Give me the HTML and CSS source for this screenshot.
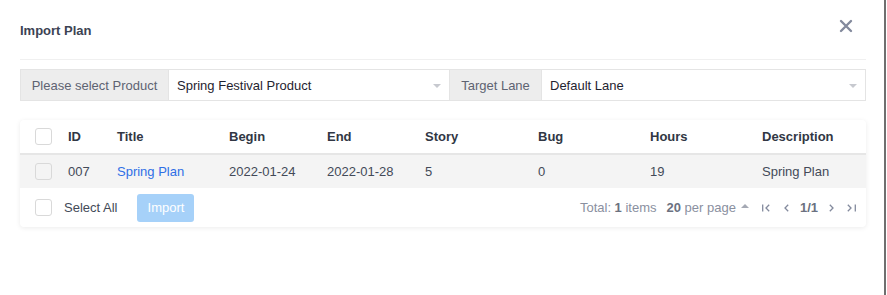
FILE: index.html
```html
<!DOCTYPE html>
<html>
<head>
<meta name="viewport" content="width=device-width, initial-scale=1">
<title>Import Plan</title>
<link rel="stylesheet" href="styles.css">
</head>
<body>

<div class="modal">
  <div class="modal-header">
    <span class="modal-title">Import Plan</span>
    <span class="close">
      <svg width="14" height="14" viewBox="0 0 14 14"><path d="M2 2 L12 12 M12 2 L2 12" stroke="#838a9d" stroke-width="2.4" stroke-linecap="round"/></svg>
    </span>
  </div>

  <div class="input-group">
    <span class="addon addon-product">Please select Product</span>
    <div class="picker picker-product">Spring Festival Product<span class="caret"></span></div>
    <span class="addon addon-lane">Target Lane</span>
    <div class="picker picker-lane">Default Lane<span class="caret"></span></div>
  </div>

  <div class="card">
    <table class="plans">
      <thead>
        <tr>
          <th class="c-check"><span class="checkbox"></span></th>
          <th class="c-id">ID</th>
          <th class="c-title">Title</th>
          <th class="c-date">Begin</th>
          <th class="c-date">End</th>
          <th class="c-story">Story</th>
          <th class="c-num">Bug</th>
          <th class="c-num">Hours</th>
          <th>Description</th>
        </tr>
      </thead>
      <tbody>
        <tr>
          <td class="c-check"><span class="checkbox"></span></td>
          <td>007</td>
          <td><a href="#">Spring Plan</a></td>
          <td>2022-01-24</td>
          <td>2022-01-28</td>
          <td>5</td>
          <td>0</td>
          <td>19</td>
          <td>Spring Plan</td>
        </tr>
      </tbody>
    </table>
    <div class="table-footer">
      <label class="select-all"><span class="checkbox"></span>Select All</label>
      <button class="btn-import" disabled>Import</button>
      <div class="pager">
        <span class="total">Total: <strong>1</strong> items</span>
        <span class="per-page"><strong>20</strong> per page</span>
        <span class="up"></span>
        <svg class="pg-first" width="8" height="8" viewBox="0 0 8 8"><path d="M0.7 0.5 V7.5 M7.2 0.8 L4 4 L7.2 7.2" fill="none" stroke="#838a9d" stroke-width="1.3"/></svg>
        <svg class="pg-prev" width="5" height="8" viewBox="0 0 5 8"><path d="M4.2 0.8 L1 4 L4.2 7.2" fill="none" stroke="#838a9d" stroke-width="1.3"/></svg>
        <strong class="pg-num">1/1</strong>
        <svg class="pg-next" width="5" height="8" viewBox="0 0 5 8"><path d="M0.8 0.8 L4 4 L0.8 7.2" fill="none" stroke="#838a9d" stroke-width="1.3"/></svg>
        <svg class="pg-last" width="9" height="8" viewBox="0 0 9 8"><path d="M0.8 0.8 L4 4 L0.8 7.2 M8.3 0.5 V7.5" fill="none" stroke="#838a9d" stroke-width="1.3"/></svg>
      </div>
    </div>
  </div>
</div>

</body>
</html>
```

FILE: styles.css
```css
body {
  margin: 0;
  background: #fff;
  font-family: "Liberation Sans", Arial, sans-serif;
  font-size: 13px;
  color: #3c4353;
}

.modal {
  width: 846px;
  height: 295px;
  padding: 0 18px 0 20px;
  border-right: 2px solid #6f6f6f;
}

/* header */
.modal-header {
  height: 59px;
  display: flex;
  align-items: center;
  justify-content: space-between;
  border-bottom: 1px solid #f0f0f0;
}

.modal-title {
  font-weight: bold;
  color: #3c4353;
  margin-top: 2px;
}

.close {
  margin-right: 13px;
  margin-bottom: 8px;
  display: flex;
}

/* product / lane pickers */
.input-group {
  display: flex;
  height: 32px;
  margin-top: 9px;
}

.addon {
  display: flex;
  align-items: center;
  justify-content: center;
  box-sizing: border-box;
  background-color: #ededed;
  color: #5e6372;
  border: 1px solid #e4e4e4;
  border-right: none;
}

.addon-product { width: 148px; }
.addon-lane { width: 92px; }

.picker {
  position: relative;
  display: flex;
  align-items: center;
  box-sizing: border-box;
  padding: 0 8px;
  background: #fff;
  border: 1px solid #e4e4e4;
  color: #1f2430;
}

.picker-product {
  width: 281px;
  border-right: none;
}

.picker-lane {
  flex: 1;
}

.caret {
  position: absolute;
  right: 8px;
  top: 14px;
  border-left: 4px solid transparent;
  border-right: 4px solid transparent;
  border-top: 4px solid #c7c9cf;
}

/* table card */
.card {
  margin-top: 19px;
  background: #fff;
  border-radius: 4px;
  box-shadow: 0 1px 5px rgba(0, 0, 0, 0.08);
}

.plans {
  width: 100%;
  border-collapse: collapse;
  table-layout: fixed;
}

.plans th,
.plans td {
  text-align: left;
  padding: 0;
  white-space: nowrap;
}

.plans th {
  height: 33px;
  font-weight: bold;
  color: #313744;
  border-bottom: 2px solid #e6e6e6;
}

.plans td {
  height: 33px;
  background-color: #f4f4f4;
  color: #434a58;
}

.plans a {
  color: #2f6fe6;
  text-decoration: none;
}

.plans .c-check {
  width: 33px;
  padding-left: 15px;
}

.c-id { width: 49px; }
.c-title { width: 112px; }
.c-date { width: 98px; }
.c-story { width: 113px; }
.c-num { width: 112px; }

.checkbox {
  display: inline-block;
  width: 15px;
  height: 15px;
  border: 1px solid #d9d9d9;
  border-radius: 3px;
  background: #fff;
  vertical-align: middle;
}

.plans td .checkbox {
  background: #f4f4f4;
}

/* footer */
.table-footer {
  display: flex;
  align-items: center;
  height: 39px;
  padding-left: 15px;
  padding-right: 10px;
}

.select-all {
  display: flex;
  align-items: center;
  gap: 12px;
  color: #434a58;
}

.btn-import {
  margin-left: 20px;
  width: 57px;
  height: 28px;
  padding: 0;
  border: none;
  border-radius: 3px;
  background-color: #a6d1f9;
  color: #fff;
  font-family: inherit;
  font-size: 13px;
}

.pager {
  margin-left: auto;
  display: flex;
  align-items: center;
  color: #8a90a0;
}

.pager strong {
  color: #6b7180;
}

.per-page { margin-left: 10px; }

.up {
  margin-left: 5px;
  margin-bottom: 3px;
  border-left: 4px solid transparent;
  border-right: 4px solid transparent;
  border-bottom: 4px solid #a5a9b4;
}

.pg-first { margin-left: 13px; }
.pg-prev { margin-left: 14px; }
.pg-num { margin-left: 11px; }
.pg-next { margin-left: 11px; }
.pg-last { margin-left: 13px; }
```
